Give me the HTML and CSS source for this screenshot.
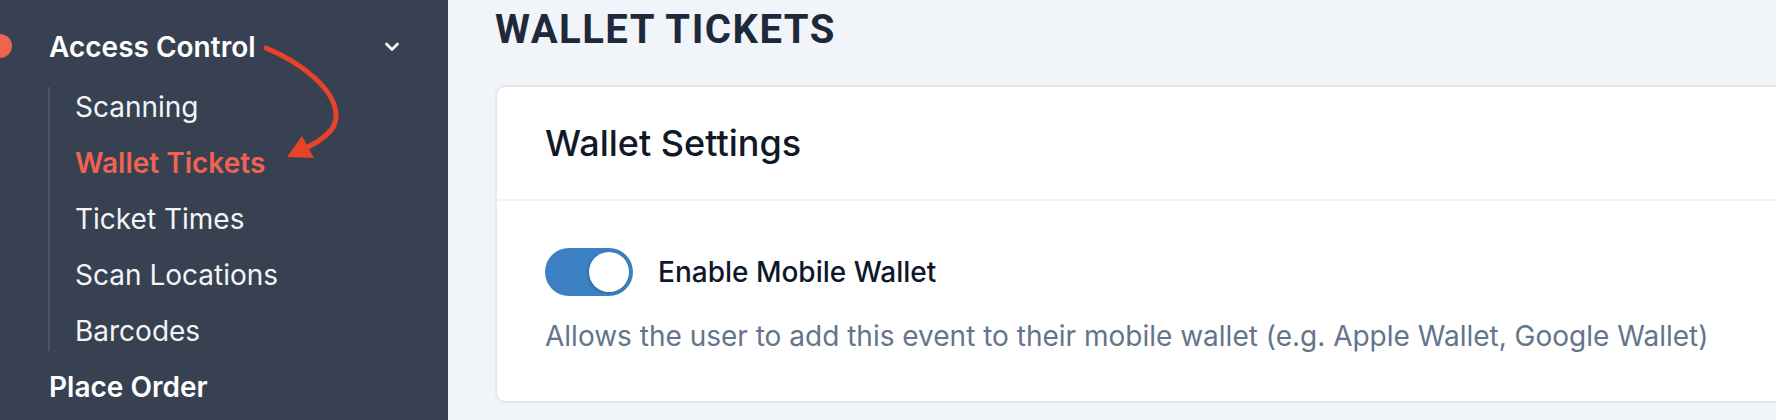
FILE: index.html
```html
<!DOCTYPE html>
<html lang="en">
<head>
  <meta charset="UTF-8">
  <meta name="viewport" content="width=device-width, initial-scale=1.0">
  <title>Wallet Tickets</title>
  <link rel="stylesheet" href="styles.css">
</head>
<body>

  <div class="page">
    <div class="sidebar">
      <div class="active-dot"></div>

      <div class="nav">
        <div class="nav-head">
          <span>Access Control</span>
          <svg class="chevron" width="16" height="16" viewBox="0 0 16 16">
            <path d="M2.5 5 L8 10.5 L13.5 5" fill="none" stroke="#ffffff" stroke-width="2.6" stroke-linecap="round" stroke-linejoin="round"/>
          </svg>
        </div>
        <div class="sub-list">
          <div class="sub-item">Scanning</div>
          <div class="sub-item current">Wallet Tickets</div>
          <div class="sub-item">Ticket Times</div>
          <div class="sub-item">Scan Locations</div>
          <div class="sub-item">Barcodes</div>
        </div>
        <div class="nav-head">
          <span>Place Order</span>
        </div>
      </div>

      <!-- hand drawn pointer over the menu -->
      <svg class="pointer" width="448" height="420" viewBox="0 0 448 420">
        <path d="M266 48 C300 62 338 90 336 118 C335 131 322 140 306 148" fill="none" stroke="#e8432a" stroke-width="5" stroke-linecap="round"/>
        <polygon points="287,157 302,136 314,158" fill="#e8432a"/>
      </svg>
    </div>

    <div class="main">
      <h1 class="page-title">WALLET TICKETS</h1>

      <div class="card">
        <div class="card-head">Wallet Settings</div>
        <div class="card-body">
          <div class="toggle-row">
            <div class="toggle on"><div class="knob"></div></div>
            <span class="toggle-label">Enable Mobile Wallet</span>
          </div>
          <p class="help-text">Allows the user to add this event to their mobile wallet (e.g. Apple Wallet, Google Wallet)</p>
        </div>
      </div>
    </div>
  </div>

</body>
</html>
```

FILE: styles.css
```css
body {
  margin: 0;
  padding: 0;
  font-family: Inter, "Noto Sans", sans-serif;
  background: #f1f4f9;
  overflow: hidden;
}

.page {
  display: flex;
  height: 420px;
}

.sidebar {
  position: relative;
  width: 448px;
  flex-shrink: 0;
  background: #374151;
  color: #f3f4f6;
}

.active-dot {
  position: absolute;
  top: 34px;
  left: -12px;
  width: 24px;
  height: 24px;
  border-radius: 50%;
  background: #ef6351;
}

.nav {
  display: flex;
  flex-direction: column;
  padding: 23px 48px 0 49px;
}

.nav-head {
  display: flex;
  justify-content: space-between;
  align-items: center;
  height: 48px;
  font-size: 28px;
  font-weight: 600;
  color: #ffffff;
}

.chevron {
  display: block;
}

.sub-list {
  display: flex;
  flex-direction: column;
  gap: 16px;
  margin: 16px 0 12px -1px;
  padding-left: 25px;
  border-left: 2px solid #4b5563;
}

.sub-item {
  font-size: 28px;
  line-height: 40px;
  color: #f3f4f6;
}

.sub-item.current {
  color: #ef6351;
  font-weight: 600;
}

.pointer {
  position: absolute;
  top: 0;
  left: 0;
  pointer-events: none;
}

.main {
  flex: 1;
  min-width: 0;
  padding-left: 47px;
  overflow: hidden;
}

.page-title {
  margin: 6px 0 0 0;
  font-family: Roboto, "Liberation Sans", sans-serif;
  font-size: 40px;
  line-height: 48px;
  font-weight: 700;
  letter-spacing: 1.5px;
  color: #1e293b;
}

.card {
  margin-top: 31px;
  margin-right: -30px;
  background: #ffffff;
  border: 2px solid #e5e7eb;
  border-radius: 10px;
}

.card-head {
  padding: 36px 48px;
  font-size: 36px;
  line-height: 40px;
  font-weight: 500;
  color: #111827;
  border-bottom: 2px solid #f1f4f8;
}

.card-body {
  padding: 47px 48px 45px 48px;
}

.toggle-row {
  display: flex;
  align-items: center;
  gap: 25px;
}

.toggle {
  position: relative;
  width: 88px;
  height: 48px;
  border-radius: 24px;
  background: #3a80c2;
}

.toggle .knob {
  position: absolute;
  top: 4px;
  right: 4px;
  width: 40px;
  height: 40px;
  border-radius: 50%;
  background: #ffffff;
  box-shadow: -1px 1px 3px rgba(0, 0, 0, 0.2);
}

.toggle-label {
  font-size: 28px;
  font-weight: 500;
  color: #0f172a;
}

.help-text {
  margin: 20px 0 0 0;
  font-size: 28px;
  line-height: 40px;
  color: #64748b;
}
```
